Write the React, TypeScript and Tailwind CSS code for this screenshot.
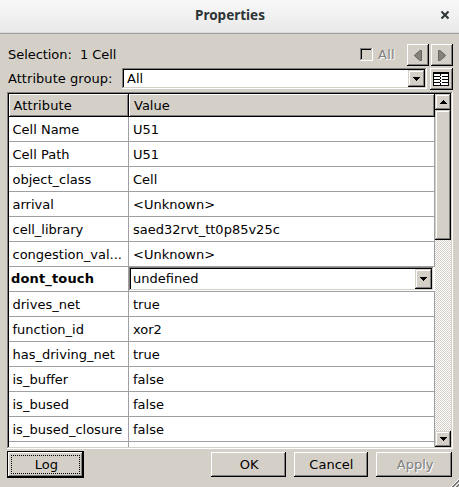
import React from "react";

const raised =
  "bg-[#d4d0c8] shadow-[inset_-1px_-1px_0_#000,inset_1px_1px_0_#fff,inset_-2px_-2px_0_#808080]";
const sunken =
  "shadow-[inset_-1px_-1px_0_#fff,inset_1px_1px_0_#808080,inset_-2px_-2px_0_#d4d0c8,inset_2px_2px_0_#000]";
const scrollRaised =
  "bg-[#d4d0c8] shadow-[inset_-1px_-1px_0_#000,inset_1px_1px_0_#d4d0c8,inset_-2px_-2px_0_#808080,inset_2px_2px_0_#fff]";

function Arrow({ up = false }: { up?: boolean }) {
  return (
    <svg width="7" height="4" shapeRendering="crispEdges" className={up ? "rotate-180" : ""}>
      <path d="M0 0h7v1H0zM1 1h5v1H1zM2 2h3v1H2zM3 3h1v1H3z" />
    </svg>
  );
}

function Select({ value, className, buttonClass }: { value: string; className: string; buttonClass: string }) {
  return (
    <div className={`flex bg-white p-[2px] ${sunken} ${className}`}>
      <span className="flex-1">{value}</span>
      <div className={`flex items-center justify-center ${scrollRaised} ${buttonClass}`}>
        <Arrow />
      </div>
    </div>
  );
}

function StepButton({ next = false }: { next?: boolean }) {
  return (
    <div className={`flex h-[22px] w-[22px] items-center pl-[7px] ${raised}`}>
      <svg width="8" height="11" viewBox="0 0 8 11" className={next ? "-scale-x-100" : ""}>
        <path d="M6 .5h1.5v10H6L.7 6V5z" fill="#84827d" stroke="#66645f" />
      </svg>
    </div>
  );
}

const rows: [string, string][] = [
  ["Cell Name", "U51"],
  ["Cell Path", "U51"],
  ["object_class", "Cell"],
  ["arrival", "<Unknown>"],
  ["cell_library", "saed32rvt_tt0p85v25c"],
  ["congestion_val...", "<Unknown>"],
  ["dont_touch", "undefined"],
  ["drives_net", "true"],
  ["function_id", "xor2"],
  ["has_driving_net", "true"],
  ["is_buffer", "false"],
  ["is_bused", "false"],
  ["is_bused_closure", "false"],
  ["", ""],
];

export default function App() {
  return (
    <div className="flex h-[487px] w-[459px] flex-col overflow-hidden bg-[#d4d0c8] font-['DejaVu_Sans',sans-serif] text-[13px] whitespace-nowrap text-black">
      <header className="flex h-[34px] shrink-0 items-center border-b border-[#a1a1a1] bg-linear-to-b from-[#f8f8f8] to-[#e9e9e9] pr-[9px] pl-[20px] shadow-[inset_0_-1px_0_#d8d8d8]">
        <h1 className="flex-1 pb-[3px] text-center font-['Noto_Sans',sans-serif] text-[13.5px] font-bold text-[#2e3436]">
          Properties
        </h1>
        <svg width="10" height="10" viewBox="0 0 10 10" className="mb-[3px]">
          <path d="M1.5 1.5l7 7M8.5 1.5l-7 7" stroke="#2e3436" strokeWidth="2" />
        </svg>
      </header>

      <div className="mt-[10px] flex h-[22px] shrink-0 pr-[6px] pl-[8px]">
        <span className="flex-1 leading-[21px] tracking-[-0.05px]">Selection:&nbsp; 1 Cell</span>
        <div className={`mt-[4px] h-[13px] w-[13px] ${sunken}`} />
        <span className="ml-[5px] w-[29px] leading-[21px] tracking-[0.3px] text-[#808080] [text-shadow:1px_1px_0_#fff]">
          All
        </span>
        <StepButton />
        <div className="w-[2px]" />
        <StepButton next />
      </div>

      <div className="mt-[2px] flex h-[22px] shrink-0 pr-[6px] pl-[8px]">
        <span className="w-[114px] leading-[21px] tracking-[0.05px]">Attribute group:</span>
        <Select value="All" className="h-[21px] w-[305px] pl-[5px] leading-[17px]" buttonClass="w-[17px]" />
        <div className={`ml-auto flex h-[22px] w-[23px] items-center pl-[3px] ${raised}`}>
          <svg width="16" height="14" shapeRendering="crispEdges">
            <path d="M0 0h16v14H0z" />
            <path d="M1 2h14v11H1z" fill="#fff" />
            <path d="M1 4h6v1H1zM9 4h6v1H9zM1 7h6v1H1zM9 7h6v1H9zM1 10h6v1H1zM9 10h6v1H9zM7 2h1v2H7zM7 5h1v2H7zM7 8h1v2H7zM7 11h1v2H7z" />
          </svg>
        </div>
      </div>

      <main className={`mt-[2px] ml-[7px] flex h-[357px] w-[446px] shrink-0 p-[2px] ${sunken}`}>
        <div className="flex h-[353px] w-[426px] flex-col overflow-hidden bg-white">
          <div className="flex h-[23px] shrink-0 leading-[24px]">
            <div className={`w-[120px] pl-[4.5px] tracking-[0.1px] ${raised}`}>Attribute</div>
            <div className={`flex-1 pl-[5px] ${raised}`}>Value</div>
          </div>
          {rows.map(([name, value], i) => (
            <div key={i} className="flex h-[25px] shrink-0 border-b border-[#a0a0a4] leading-[26px]">
              <div
                className={`w-[120px] shrink-0 border-r border-[#a0a0a4] ${
                  name === "dont_touch" ? "pl-[2px] leading-[24px] font-bold tracking-[0.15px]" : "pl-[3.5px]"
                }`}
              >
                {name}
              </div>
              {name === "dont_touch" ? (
                <Select value={value} className="h-[24px] w-[305px] pl-[4px] leading-[20px]" buttonClass="w-[17px]" />
              ) : (
                <div className="flex-1 border-r border-[#a0a0a4] pl-[4px]">{value}</div>
              )}
            </div>
          ))}
        </div>
        <div className="flex h-[353px] w-[16px] flex-col bg-[#ebe9e5] [background-image:repeating-conic-gradient(#d4d0c8_0_25%,#fff_0_50%)] bg-[length:2px_2px]">
          <div className={`flex h-[16px] items-center justify-center ${scrollRaised}`}>
            <Arrow up />
          </div>
          <div className={`h-[130px] ${scrollRaised}`} />
          <div className="flex-1" />
          <div className={`flex h-[16px] items-center justify-center ${scrollRaised}`}>
            <Arrow />
          </div>
        </div>
      </main>

      <footer className="mt-[2px] flex h-[36px] pl-[7px] leading-[25px]">
        <div className="h-[27px] w-[77px] border border-black">
          <div className={`h-[25px] p-[3px] ${raised}`}>
            <div className="h-[19px] border border-dotted border-black pl-[2px] text-center leading-[18px]">Log</div>
          </div>
        </div>
        <div className={`mt-px ml-[127px] h-[25px] w-[75px] pl-[2px] text-center ${raised}`}>OK</div>
        <div className={`mt-px ml-[8px] h-[25px] w-[75px] pl-[1px] text-center ${raised}`}>Cancel</div>
        <div
          className={`mt-px ml-[8px] h-[25px] w-[76px] pl-[2px] text-center text-[#808080] [text-shadow:1px_1px_0_#fff] ${raised}`}
        >
          Apply
        </div>
        <svg width="8" height="8" viewBox="0 0 8 8" className="-ml-px self-end">
          <path d="M0 8L8 0M4 8l4-4" stroke="#fff" strokeWidth="1" />
          <path d="M1 8l7-7M2 8l6-6M5 8l3-3M6 8l2-2" stroke="#777" strokeWidth="1" />
        </svg>
      </footer>
    </div>
  );
}
